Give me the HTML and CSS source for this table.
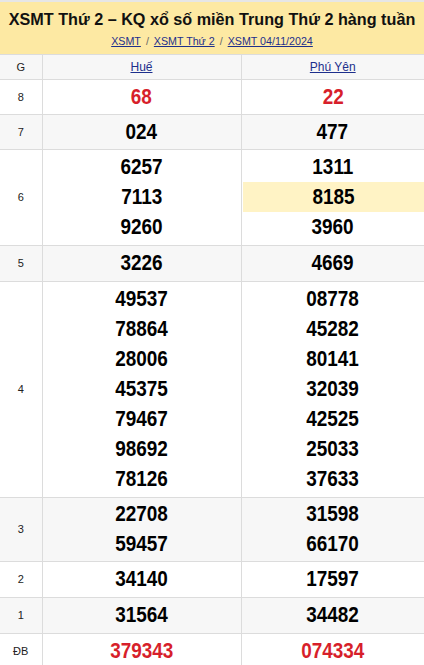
FILE: index.html
```html
<!DOCTYPE html>
<html lang="vi">
<head>
<meta charset="utf-8">
<title>XSMT Thứ 2</title>
<link rel="stylesheet" href="styles.css">
</head>
<body>
<div class="head">
  <h1 class="title">XSMT Thứ 2 – KQ xổ số miền Trung Thứ 2 hàng tuần</h1>
  <div class="crumbs"><a href="#">XSMT</a><span class="sep">/</span><a href="#">XSMT Thứ 2</a><span class="sep">/</span><a href="#">XSMT 04/11/2024</a></div>
</div>
<table class="kq">
  <colgroup><col class="c-g"><col class="c-a"><col class="c-b"></colgroup>
  <thead>
    <tr><th class="lbl">G</th><th><a href="#">Huế</a></th><th><a href="#">Phú Yên</a></th></tr>
  </thead>
  <tbody>
    <tr class="tight"><td class="lbl">8</td><td><div class="n red"><span>68</span></div></td><td><div class="n red"><span>22</span></div></td></tr>
    <tr class="alt tight"><td class="lbl">7</td><td><div class="n"><span>024</span></div></td><td><div class="n"><span>477</span></div></td></tr>
    <tr><td class="lbl">6</td><td><div class="n"><span>6257</span></div><div class="n"><span>7113</span></div><div class="n"><span>9260</span></div></td><td><div class="n"><span>1311</span></div><div class="n hl"><span>8185</span></div><div class="n"><span>3960</span></div></td></tr>
    <tr class="alt"><td class="lbl">5</td><td><div class="n"><span>3226</span></div></td><td><div class="n"><span>4669</span></div></td></tr>
    <tr><td class="lbl">4</td><td><div class="n"><span>49537</span></div><div class="n"><span>78864</span></div><div class="n"><span>28006</span></div><div class="n"><span>45375</span></div><div class="n"><span>79467</span></div><div class="n"><span>98692</span></div><div class="n"><span>78126</span></div></td><td><div class="n"><span>08778</span></div><div class="n"><span>45282</span></div><div class="n"><span>80141</span></div><div class="n"><span>32039</span></div><div class="n"><span>42525</span></div><div class="n"><span>25033</span></div><div class="n"><span>37633</span></div></td></tr>
    <tr class="alt pair"><td class="lbl">3</td><td><div class="n"><span>22708</span></div><div class="n"><span>59457</span></div></td><td><div class="n"><span>31598</span></div><div class="n"><span>66170</span></div></td></tr>
    <tr><td class="lbl">2</td><td><div class="n"><span>34140</span></div></td><td><div class="n"><span>17597</span></div></td></tr>
    <tr class="alt"><td class="lbl">1</td><td><div class="n"><span>31564</span></div></td><td><div class="n"><span>34482</span></div></td></tr>
    <tr><td class="lbl">ĐB</td><td><div class="n red"><span>379343</span></div></td><td><div class="n red"><span>074334</span></div></td></tr>
  </tbody>
</table>
</body>
</html>
```
FILE: styles.css
```css
html, body {
  margin: 0;
  padding: 0;
  background: #fff;
  font-family: "Liberation Sans", Arial, sans-serif;
  color: #000;
}
.head {
  border-top: 2px solid #e6e6e6;
  background: #fde9a3;
  height: 52px;
  text-align: center;
}
.title {
  margin: 0;
  padding-top: 7px;
  font-size: 16.2px;
  line-height: 20px;
  font-weight: bold;
  color: #111;
  white-space: nowrap;
}
.crumbs {
  margin-top: 5px;
  font-size: 10.7px;
  line-height: 14px;
  color: #666;
}
.crumbs a {
  color: #1d2f8c;
  text-decoration: underline;
}
.crumbs .sep {
  margin: 0 5px;
}
.kq {
  width: 424px;
  border-collapse: collapse;
  table-layout: fixed;
}
.c-g { width: 42px; }
.c-a { width: 199px; }
.c-b { width: 183px; }
.kq th, .kq td {
  border: 1px solid #dcdcdc;
  text-align: center;
  vertical-align: middle;
  padding: 2px 0 3px;
}
.kq tr.tight > td { padding: 2px 0; }
.kq tr.pair > td { padding: 1px 0 2px; }
.kq tr > :first-child { border-left: 0; }
.kq tr > :last-child { border-right: 0; }
.kq thead tr { background: #f7f7f7; }
.kq th {
  height: 20px;
  padding: 2px 0;
  font-weight: normal;
  font-size: 12px;
}
.kq th a {
  color: #1d2f8c;
  text-decoration: underline;
}
.lbl {
  font-size: 11px;
  color: #222;
}
.kq th.lbl { font-size: 11px; }
.alt { background: #f7f7f7; }
.n {
  font-weight: bold;
  font-size: 22px;
  line-height: 30px;
  color: #000;
}
.n span {
  display: inline-block;
  transform: scaleX(0.86);
}
.n.red { color: #d71f2b; }
.n.hl { background: #fff3c5; margin-left: 1px; }
```
